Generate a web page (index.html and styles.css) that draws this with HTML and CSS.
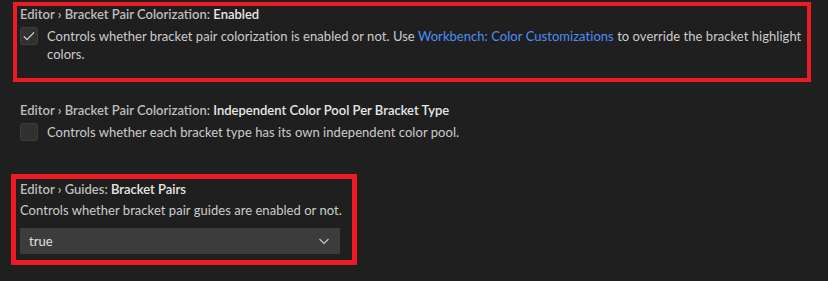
FILE: index.html
```html
<!DOCTYPE html>
<html lang="en">
<head>
<meta charset="utf-8">
<title>Settings</title>
<link rel="stylesheet" href="styles.css">
</head>
<body>
<div class="page">
  <div class="setting box box-wide">
    <div class="title"><span class="cat">Editor › Bracket Pair Colorization: </span><span class="key">Enabled</span></div>
    <div class="row">
      <span class="checkbox">
        <svg width="16" height="16" viewBox="0 0 16 16"><path d="M2.8 8.4 L6 11.6 L13 4.4" fill="none" stroke="#d4d4d4" stroke-width="1.3"/></svg>
      </span>
      <div class="desc">Controls whether bracket pair colorization is enabled or not. Use <span class="link">Workbench: Color Customizations</span> to override the bracket highlight colors.</div>
    </div>
  </div>

  <div class="setting plain">
    <div class="title"><span class="cat">Editor › Bracket Pair Colorization: </span><span class="key">Independent Color Pool Per Bracket Type</span></div>
    <div class="row">
      <span class="checkbox"></span>
      <div class="desc">Controls whether each bracket type has its own independent color pool.</div>
    </div>
  </div>

  <div class="setting box box-narrow">
    <div class="title"><span class="cat">Editor › Guides: </span><span class="key">Bracket Pairs</span></div>
    <div class="desc">Controls whether bracket pair guides are enabled or not.</div>
    <div class="select">
      <span class="value">true</span>
      <svg class="chev" width="16" height="16" viewBox="0 0 16 16"><path d="M3.5 6 L8 10.5 L12.5 6" fill="none" stroke="#c5c5c5" stroke-width="1.2"/></svg>
    </div>
  </div>
</div>
</body>
</html>
```
FILE: styles.css
```css
html, body {
  margin: 0;
  padding: 0;
  background: #1f1f1f;
}
body {
  font-family: "Segoe UI", Lato, "Noto Sans", sans-serif;
  font-size: 13px;
  color: #cccccc;
}
.page {
  padding-top: 2px;
  width: 828px;
  height: 281px;
  box-sizing: border-box;
  overflow: hidden;
}
.setting {
  box-sizing: border-box;
}
.box {
  border: 4px solid #ed1c24;
}
.box-wide {
  margin-left: 13px;
  width: 798px;
  padding: 0 4px 15px 3px;
}
.box-wide .title {
  margin-top: -1px;
}
.plain {
  margin-top: 19px;
  padding-left: 20px;
}
.box-narrow {
  margin-top: 33px;
  margin-left: 11px;
  width: 346px;
  border-width: 5px;
  padding: 1px 4px 6px 4px;
}
.title {
  line-height: 18px;
  font-weight: 600;
  white-space: nowrap;
}
.cat {
  color: #bdbdbd;
}
.key {
  color: #e7e7e7;
}
.row {
  display: flex;
  align-items: flex-start;
  gap: 9px;
  margin-top: 4px;
}
.checkbox {
  flex: 0 0 auto;
  box-sizing: border-box;
  width: 18px;
  height: 18px;
  border-radius: 3px;
  background: #313131;
  border: 1px solid #3c3c3c;
  display: flex;
  align-items: center;
  justify-content: center;
}
.desc {
  line-height: 18px;
  color: #cccccc;
  letter-spacing: 0.04px;
}
.box-wide .desc {
  width: 760px;
}
.box-narrow .desc {
  margin-top: 3px;
}
.link {
  color: #4d8ef8;
}
.select {
  margin-top: 9px;
  width: 320px;
  height: 26px;
  box-sizing: border-box;
  background: #3c3c3c;
  display: flex;
  align-items: center;
  justify-content: space-between;
  padding: 0 8px 0 9px;
  color: #e0e0e0;
}
.value {
  line-height: 18px;
}
.chev {
  display: block;
}
```
